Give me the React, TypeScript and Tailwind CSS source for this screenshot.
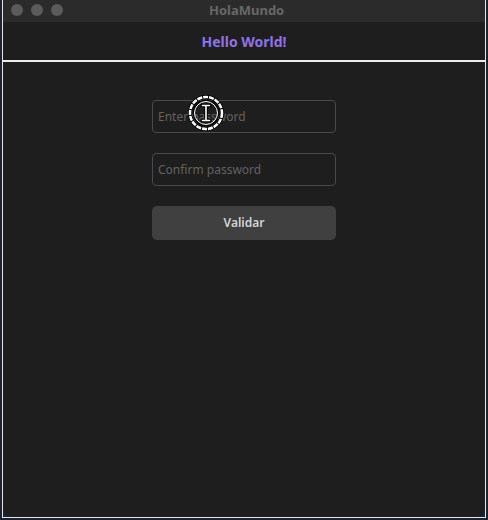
import React from 'react';

function TrafficLights() {
  return (
    <div className="flex items-center gap-[8px]">
      {[0, 1, 2].map((i) => (
        <span key={i} className="block h-[12px] w-[12px] rounded-full bg-[#5b5b5b]" />
      ))}
    </div>
  );
}

function CursorMark() {
  return (
    <svg
      className="pointer-events-none absolute left-[185px] top-[95px]"
      width="36"
      height="36"
      viewBox="0 0 36 36"
    >
      <circle cx="18" cy="18" r="16" fill="none" stroke="#000" strokeWidth="4" />
      <circle cx="18" cy="18" r="16" fill="none" stroke="#fff" strokeWidth="2.5" strokeDasharray="5 1" />
      <circle cx="18" cy="18" r="12.5" fill="none" stroke="#000" strokeWidth="1.5" />
      <circle cx="18" cy="18" r="11.5" fill="none" stroke="#fff" strokeWidth="1" />
      <path
        d="M14 10.5h8M14 25.5h8M18 11v14"
        stroke="#000"
        strokeWidth="3.5"
        strokeLinecap="round"
      />
      <path
        d="M14.5 10.5h7M14.5 25.5h7M18 11v14"
        stroke="#fff"
        strokeWidth="1.6"
        strokeLinecap="round"
      />
    </svg>
  );
}

export default function App() {
  const font = { fontFamily: '"Noto Sans", "Open Sans", sans-serif' };

  return (
    <div className="h-[520px] w-[488px] bg-[#1b2330] pl-[2px]" style={font}>
      <div className="h-[518px] w-[484px] border-x border-b border-[#e6e6e6] bg-[#1b2330]">
        <div className="relative flex h-[517px] w-[482px] flex-col overflow-hidden rounded-b-[11px] bg-[#1e1e1e]">
          <div className="flex h-[22px] shrink-0 items-center bg-[#2b2b2b] px-[8px] pb-[2px]">
            <TrafficLights />
            <span className="ml-[146px] text-[13px] font-bold leading-none text-[#676767]">HolaMundo</span>
          </div>

          <div className="flex h-[38px] shrink-0 items-center justify-center">
            <span className="text-[14px] font-bold text-[#8f73e6]">Hello World!</span>
          </div>
          <div className="h-[2px] shrink-0 bg-[#ececec]" />

          <div className="flex flex-col items-center gap-[20px] pt-[38px]">
            <input
              type="password"
              placeholder="Enter password"
              className="h-[33px] w-[184px] rounded-[4px] border border-[#4a4a4a] bg-transparent px-[5px] text-[12px] text-[#cfcfcf] outline-none placeholder:text-[#626262]"
            />
            <input
              type="password"
              placeholder="Confirm password"
              className="h-[33px] w-[184px] rounded-[4px] border border-[#4a4a4a] bg-transparent px-[5px] text-[12px] text-[#cfcfcf] outline-none placeholder:text-[#626262]"
            />
            <button className="h-[34px] w-[184px] rounded-[5px] bg-[#404040] text-[12px] font-semibold text-[#d4d4d4]">
              Validar
            </button>
          </div>

          <CursorMark />
        </div>
      </div>
    </div>
  );
}
